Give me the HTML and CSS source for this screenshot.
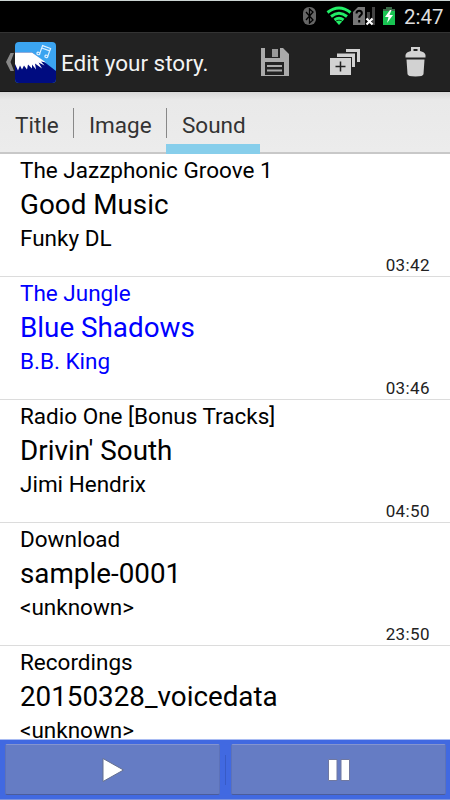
FILE: index.html
```html
<!DOCTYPE html>
<html lang="en">
<head>
    <meta charset="UTF-8">
    <meta name="viewport" content="width=device-width, initial-scale=1.0">
    <title>Edit your story.</title>
    <link rel="stylesheet" href="styles.css">
</head>
<body>
    <div class="status-bar">
        <svg class="status-icons" width="110" height="32" viewBox="0 0 110 32">
            <rect x="3" y="7" width="13" height="18" rx="6" fill="#666"/>
            <path d="M6 12l7 8-3.500 3V9l3.500 3-7 8" fill="none" stroke="#000" stroke-width="1.300"/>
            <g fill="none" stroke="#22ee66" stroke-width="2.900">
                <path d="M27.500 12.500q11.500-9 23 0"/>
                <path d="M31 16.500q8-6.500 16 0"/>
                <path d="M34.500 20q4.500-3.500 9 0"/>
            </g>
            <path d="M35.800 21.500q3.200-2 6.400 0L39 25z" fill="#22ee66"/>
            <path d="M53 12l5-5h7v18H53z" fill="#777"/>
            <path d="M56.500 13.500q0-2.700 2.700-2.700t2.700 2.500c0 2-2.700 2-2.700 4.500M59.200 20v2.500" fill="none" stroke="#000" stroke-width="2"/>
            <path d="M67 12h3v7h-3zM72 7h3v18h-3z" fill="#444"/>
            <path d="M66.500 18.500l6 6m0-6l-6 6" stroke="#fff" stroke-width="2.200"/>
            <path d="M86 7h6v2h3v16H83V9h3z" fill="#18c452"/>
            <path d="M86 7h6v2h3v2H83V9h3z" fill="#3a6b48"/>
            <path d="M90 10l-5 7h3.500L87 23l6-8h-3.500l2-5z" fill="#fff"/>
        </svg>
        <span class="clock">2:47</span>
    </div>

    <div class="action-bar">
        <svg class="back" width="10" height="20" viewBox="0 0 10 20">
            <path d="M5.500 1h3.500L5.500 10 9 19H5.500L1 10z" fill="#888"/>
        </svg>
        <svg class="logo" width="41" height="41" viewBox="0 0 41 41">
            <clipPath id="logoShape"><rect width="41" height="41" rx="4"/></clipPath>
            <g clip-path="url(#logoShape)">
                <rect width="41" height="41" fill="#3ba4f0"/>
                <path d="M0 10.500h17L41 29v12H0z" fill="#000c80"/>
                <path d="M0 10.500h17L31 20.500l-5-1 3.500 4-6-3 3.500 6-7-5 1 6-4-5 0 4-4-4-1 5-3-4-2 4-2-4-2 5L0 22z" fill="#fff"/>
                <g transform="rotate(20 29 10)" fill="none" stroke="#dff1ff" stroke-width="1.200">
                    <path d="M25.500 13V4.500h8.500V13M25.500 7h8.500"/>
                    <ellipse cx="24.200" cy="13.300" rx="1.500" ry="1.200"/>
                    <ellipse cx="32.700" cy="13.300" rx="1.500" ry="1.200"/>
                </g>
            </g>
        </svg>
        <h1 class="title">Edit your story.</h1>
        <div class="actions">
            <svg width="70" height="60" viewBox="0 0 70 60">
                <path fill="#aaa" fill-rule="evenodd" d="M21 16h4v10h15V16h3l6 6v22H21zM25 30v13h19V30z"/>
                <path fill="#999" d="M32 17h6v8h-6z"/>
                <path fill="#aaa" d="M27 33h15v2H27zM27 37.500h15v2H27z"/>
            </svg>
            <svg width="70" height="60" viewBox="0 0 70 60">
                <path fill="#d2d2d2" d="M36 17h14v13h-3V20H36zM27 21.500h18V35h-3V25H27zM20 26h21v17H20z"/>
                <path d="M25.500 34.500h10M30.500 29.500v10" stroke="#222" stroke-width="1.500"/>
            </svg>
            <svg width="70" height="60" viewBox="0 0 70 60">
                <path fill="#d2d2d2" fill-rule="evenodd" d="M31 15h9v4q5 1 5.500 4v2.500h-20V23q.5-3 5.500-4zm2.500 2v2h4v-2z"/>
                <path fill="#d2d2d2" d="M26.500 27.500h18L43.500 42q0 2.500-8 2.500t-8-2.500z"/>
            </svg>
        </div>
    </div>

    <div class="tabs">
        <div class="tab tab-title">Title</div>
        <div class="tab tab-image">Image</div>
        <div class="tab tab-sound active">Sound</div>
    </div>

    <div class="song-list">
        <div class="song">
            <div class="album">The Jazzphonic Groove 1</div>
            <div class="name">Good Music</div>
            <div class="artist">Funky DL</div>
            <div class="time">03:42</div>
        </div>
        <div class="song selected">
            <div class="album">The Jungle</div>
            <div class="name">Blue Shadows</div>
            <div class="artist">B.B. King</div>
            <div class="time">03:46</div>
        </div>
        <div class="song">
            <div class="album">Radio One [Bonus Tracks]</div>
            <div class="name">Drivin' South</div>
            <div class="artist">Jimi Hendrix</div>
            <div class="time">04:50</div>
        </div>
        <div class="song">
            <div class="album">Download</div>
            <div class="name">sample-0001</div>
            <div class="artist">&lt;unknown&gt;</div>
            <div class="time">23:50</div>
        </div>
        <div class="song">
            <div class="album">Recordings</div>
            <div class="name">20150328_voicedata</div>
            <div class="artist">&lt;unknown&gt;</div>
        </div>
    </div>

    <div class="player">
        <button class="player-button" aria-label="Play">
            <svg width="26" height="28" viewBox="0 0 26 28">
                <path d="M3 2.500v23L23.500 14z" fill="#fff" stroke="#65708f" stroke-width="1"/>
            </svg>
        </button>
        <span class="separator"></span>
        <button class="player-button" aria-label="Pause">
            <svg width="26" height="28" viewBox="0 0 26 28">
                <path d="M2.500 3.500h8.500v21h-8.500zM15 3.500h8.500v21H15z" fill="#fff" stroke="#7078a0" stroke-width="1"/>
            </svg>
        </button>
    </div>
</body>
</html>
```
FILE: styles.css
```css
body {
    margin: 0;
    width: 450px;
    height: 800px;
    overflow: hidden;
    display: flex;
    flex-direction: column;
    font-family: Roboto, sans-serif;
    background-color: #fff;
    color: #000;
}
.status-bar {
    height: 32px;
    box-sizing: border-box;
    border-top: 1px solid #ccd5d3;
    background-color: #000;
    display: flex;
    justify-content: flex-end;
    padding-right: 8px;
    flex-shrink: 0;
}
.status-icons {
    margin-top: -1px;
    margin-right: -6px;
}
.clock {
    width: 38px;
    color: #dedede;
    font-size: 20.5px;
    line-height: 33px;
    white-space: nowrap;
}
.action-bar {
    height: 60px;
    box-sizing: border-box;
    border-top: 1px solid #333;
    border-bottom: 1px solid #111;
    background-color: #222;
    display: flex;
    align-items: center;
    flex-shrink: 0;
}
.back {
    margin-left: 5px;
}
.title {
    margin: 0 0 0 5px;
    padding-top: 2px;
    color: #f3f3f3;
    font-size: 22.5px;
    font-weight: normal;
    white-space: nowrap;
}
.actions {
    display: flex;
    margin-left: auto;
}
.tabs {
    height: 62px;
    box-sizing: border-box;
    border-bottom: 2px solid #c8c8c8;
    background: linear-gradient(#d8d8d8, #e9e9e9 8px, #ececec);
    display: flex;
    align-items: flex-start;
    flex-shrink: 0;
}
.tab {
    height: 62px;
    box-sizing: border-box;
    color: #333;
    font-size: 22.5px;
    line-height: 66px;
    padding-left: 15px;
    background: linear-gradient(#888, #888) no-repeat right 16px / 1px 30px;
}
.tab-title {
    width: 74px;
}
.tab-image {
    width: 93px;
}
.tab-sound {
    width: 94px;
    margin-left: -1px;
    padding-left: 16px;
}
.active {
    background: linear-gradient(#87ceeb, #87ceeb) no-repeat 0 52px / 100% 10px;
}
.song-list {
    flex: 1;
    min-height: 0;
    overflow: hidden;
}
.song {
    height: 123px;
    box-sizing: border-box;
    border-bottom: 1px solid #dcdcdc;
    padding: 0 20px;
    white-space: nowrap;
}
.selected {
    color: #0000ff;
}
.album,
.artist {
    font-size: 22.5px;
    line-height: 33px;
}
.name {
    font-size: 27.8px;
    line-height: 35px;
}
.time {
    color: #222;
    font-size: 17px;
    letter-spacing: 0.4px;
    line-height: 20px;
    text-align: right;
}
.player {
    height: 61px;
    box-sizing: border-box;
    border-top: 1px solid #a9bcf3;
    border-bottom: 1px solid #7d93dd;
    background-color: #4169e1;
    display: flex;
    align-items: center;
    padding: 0 4px 0 5px;
    flex-shrink: 0;
}
.player-button {
    flex: 1;
    height: 51px;
    box-sizing: border-box;
    border: 1px solid #5d72b8;
    border-top-color: #8494cf;
    border-bottom-color: #4b5c9a;
    border-radius: 2px;
    background-color: #657cc4;
    padding: 0;
    display: flex;
    align-items: center;
    justify-content: center;
}
.separator {
    width: 1px;
    height: 30px;
    margin: 0 5px;
    background-color: #385bc6;
}
```
